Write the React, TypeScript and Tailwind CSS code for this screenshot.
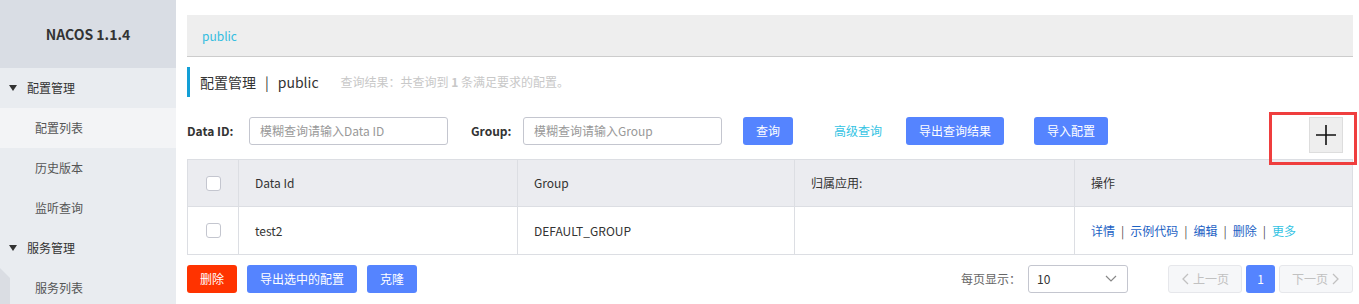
import React from "react";

const font = "font-['Noto_Sans_CJK_SC','Noto_Sans',sans-serif]";

const NavGroup = ({ label }: { label: string }) => (
  <div className="h-10 flex items-center pl-[9px] text-[12px] text-[#333]">
    <span className="w-0 h-0 border-l-[4px] border-r-[4px] border-t-[6px] border-l-transparent border-r-transparent border-t-[#333] mr-[10px]" />
    {label}
  </div>
);

const NavItem = ({ label, active }: { label: string; active?: boolean }) => (
  <div
    className={
      "h-10 flex items-center pl-[35px] text-[12px] text-[#555] " +
      (active ? "bg-[#f3f4f6]" : "")
    }
  >
    {label}
  </div>
);

const Checkbox = () => (
  <span className="block w-[15px] h-[15px] rounded-[3px] border border-[#c4c6cf] bg-white" />
);

const BlueButton = ({ children, w }: { children: React.ReactNode; w: string }) => (
  <button className={"h-7 rounded-[3px] bg-[#5584ff] text-white text-[12px] flex items-center justify-center " + w}>
    {children}
  </button>
);

export default function App() {
  return (
    <div className={"w-[1359px] h-[304px] overflow-hidden flex bg-white " + font}>
      {/* sidebar */}
      <div className="w-[176px] shrink-0 bg-[#e9ecf0] relative">
        <div className="h-[68px] bg-[#d9dde4] flex items-center justify-center text-[14px] font-bold text-[#333]">
          NACOS 1.1.4
        </div>
        <NavGroup label="配置管理" />
        <NavItem label="配置列表" active />
        <NavItem label="历史版本" />
        <NavItem label="监听查询" />
        <NavGroup label="服务管理" />
        <NavItem label="服务列表" />
        <div className="absolute left-0 top-[268px] w-[10px] h-[40px] bg-[#dadde3] [clip-path:polygon(0_0,100%_25%,100%_100%,0_100%)]" />
      </div>

      {/* main */}
      <div className="flex-1 pl-[11px] pr-[6px] pt-[15px] relative">
        <div className="h-[42px] bg-[#eeeeee] border-b border-[#cccccc] flex items-center pl-[15px] text-[12px] text-[#33bde0]">
          public
        </div>

        <div className="mt-[10px] h-[30px] border-l-[3px] border-[#139fd6] flex items-center pl-[10px]">
          <span className="text-[14px] text-[#333]">配置管理</span>
          <span className="text-[14px] text-[#333] mx-[9px]">|</span>
          <span className="text-[14px] text-[#333]">public</span>
          <span className="ml-[22px] text-[12px] text-[#c8c8c8]">
            查询结果：共查询到 <b className="font-bold">1</b> 条满足要求的配置。
          </span>
        </div>

        <div className="mt-[20px] h-7 flex items-center">
          <span className="w-[62px] text-[12px] font-bold text-[#333]">Data ID:</span>
          <div className="w-[199px] h-7 rounded-[3px] border border-[#c4c6cf] flex items-center pl-[10px] text-[12px] text-[#999]">
            模糊查询请输入Data ID
          </div>
          <span className="ml-[23px] w-[52px] text-[12px] font-bold text-[#333]">Group:</span>
          <div className="w-[199px] h-7 rounded-[3px] border border-[#c4c6cf] flex items-center pl-[10px] text-[12px] text-[#999]">
            模糊查询请输入Group
          </div>
          <div className="ml-[21px]">
            <BlueButton w="w-[50px]">查询</BlueButton>
          </div>
          <span className="ml-[41px] text-[12px] text-[#33c3e3]">高级查询</span>
          <div className="ml-[24px]">
            <BlueButton w="w-[98px]">导出查询结果</BlueButton>
          </div>
          <div className="ml-[30px]">
            <BlueButton w="w-[74px]">导入配置</BlueButton>
          </div>
          <div className="ml-auto mr-[10px] mt-[8px] w-[34px] h-[36px] bg-[#eeeeee] border border-[#dddddd] flex items-center justify-center">
            <svg width="22" height="22" viewBox="0 0 22 22">
              <path d="M11 1v20M1 11h20" stroke="#111" strokeWidth="1.6" />
            </svg>
          </div>
        </div>

        {/* annotation frame */}
        <div className="absolute left-[1093px] top-[112px] w-[88px] h-[53px] border-[3px] border-[#ef3e3e]" />

        <div className="mt-[14px] border border-[#dcdee3] text-[12px] text-[#333]">
          <div className="grid grid-cols-[51px_279px_277px_280px_1fr] h-[47px] bg-[#ebecf0] border-b border-[#dcdee3]">
            <div className="flex items-center justify-center border-r border-[#dcdee3]">
              <Checkbox />
            </div>
            <div className="flex items-center pl-[16px] border-r border-[#dcdee3]">Data Id</div>
            <div className="flex items-center pl-[16px] border-r border-[#dcdee3]">Group</div>
            <div className="flex items-center pl-[16px] border-r border-[#dcdee3]">归属应用:</div>
            <div className="flex items-center pl-[16px]">操作</div>
          </div>
          <div className="grid grid-cols-[51px_279px_277px_280px_1fr] h-[47px]">
            <div className="flex items-center justify-center border-r border-[#dcdee3]">
              <Checkbox />
            </div>
            <div className="flex items-center pl-[16px] border-r border-[#dcdee3]">test2</div>
            <div className="flex items-center pl-[16px] border-r border-[#dcdee3]">DEFAULT_GROUP</div>
            <div className="flex items-center pl-[16px] border-r border-[#dcdee3]" />
            <div className="flex items-center pl-[16px] text-[#1c62c4]">
              <span>详情</span>
              <span className="mx-[6px] text-[#555]">|</span>
              <span>示例代码</span>
              <span className="mx-[6px] text-[#555]">|</span>
              <span>编辑</span>
              <span className="mx-[6px] text-[#555]">|</span>
              <span>删除</span>
              <span className="mx-[6px] text-[#555]">|</span>
              <span className="text-[#33c3e3]">更多</span>
            </div>
          </div>
        </div>

        <div className="mt-[10px] h-7 flex items-center">
          <button className="w-[50px] h-7 rounded-[3px] bg-[#ff3300] text-white text-[12px]">删除</button>
          <div className="ml-[10px]">
            <BlueButton w="w-[110px]">导出选中的配置</BlueButton>
          </div>
          <div className="ml-[10px]">
            <BlueButton w="w-[50px]">克隆</BlueButton>
          </div>
          <span className="ml-auto text-[12px] text-[#666]">每页显示：</span>
          <div className="ml-[7px] w-[100px] h-7 rounded-[3px] border border-[#c4c6cf] flex items-center justify-between pl-[8px] pr-[10px] text-[12px] text-[#333]">
            10
            <svg width="12" height="8" viewBox="0 0 12 8">
              <path d="M1 1l5 5 5-5" stroke="#888" strokeWidth="1.2" fill="none" />
            </svg>
          </div>
          <div className="ml-[40px] w-[74px] h-7 rounded-[3px] bg-[#f6f7f9] border border-[#e6e7eb] flex items-center justify-center gap-[4px] text-[12px] text-[#c1c1c1]">
            <svg width="8" height="12" viewBox="0 0 8 12">
              <path d="M7 1L2 6l5 5" stroke="#c1c1c1" strokeWidth="1.3" fill="none" />
            </svg>
            上一页
          </div>
          <div className="ml-[4px] w-[29px] h-7 rounded-[3px] bg-[#5584ff] flex items-center justify-center text-[12px] text-white">1</div>
          <div className="ml-[4px] w-[74px] h-7 rounded-[3px] bg-[#f6f7f9] border border-[#e6e7eb] flex items-center justify-center gap-[4px] text-[12px] text-[#c1c1c1]">
            下一页
            <svg width="8" height="12" viewBox="0 0 8 12">
              <path d="M1 1l5 5-5 5" stroke="#c1c1c1" strokeWidth="1.3" fill="none" />
            </svg>
          </div>
        </div>
      </div>
    </div>
  );
}
